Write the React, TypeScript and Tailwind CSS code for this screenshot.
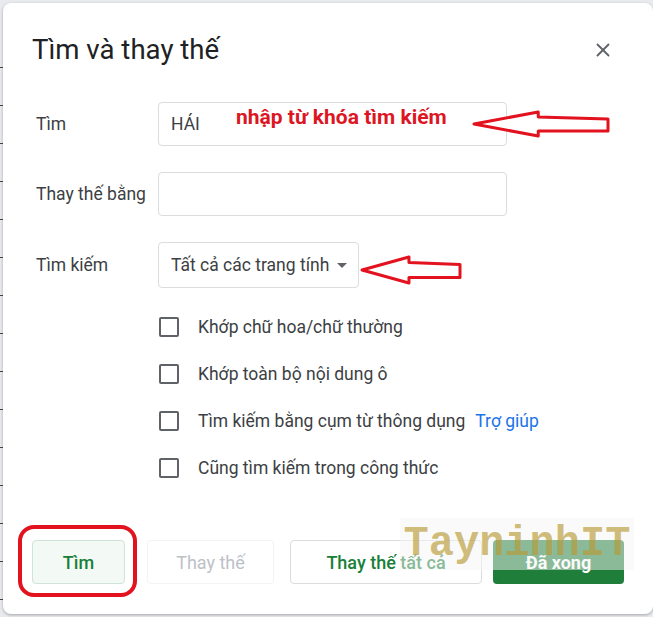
import { X } from "lucide-react";

const options = [
  { label: "Khớp chữ hoa/chữ thường" },
  { label: "Khớp toàn bộ nội dung ô" },
  { label: "Tìm kiếm bằng cụm từ thông dụng", help: "Trợ giúp" },
  { label: "Cũng tìm kiếm trong công thức" },
];

function Checkbox() {
  return <span className="h-[20px] w-[20px] shrink-0 rounded-[2px] border-2 border-[#5f6368]" />;
}

function LeftArrow({ w, h }: { w: number; h: number }) {
  // hand-drawn red outline arrow pointing left
  const head = w * 0.48;
  const sy = h * 0.25;
  return (
    <svg width={w} height={h} viewBox={`0 0 ${w} ${h}`}>
      <polygon
        points={`2,${h / 2} ${head},2 ${head},${sy} ${w - 2},${sy + 2} ${w - 2},${h - sy} ${head},${h - sy} ${head},${h - 2}`}
        fill="white"
        stroke="#e3121f"
        strokeWidth="3"
        strokeLinejoin="round"
      />
    </svg>
  );
}

export default function App() {
  return (
    <div className="relative h-[617px] w-[653px] overflow-hidden bg-[#e8eaed] font-['Roboto',sans-serif]">
      {/* spreadsheet grid peeking out on the left */}
      <div className="absolute left-0 top-[30px] h-[587px] w-[3px] bg-[repeating-linear-gradient(to_bottom,transparent_0px,transparent_37px,#444_37px,#444_38px)]" />

      <div className="relative ml-[3px] mt-[3px] flex h-[611px] w-[650px] flex-col rounded-lg bg-white pl-[29px] pr-[28px] pt-[31px] shadow-[0_1px_3px_rgba(0,0,0,0.3)]">
        {/* header */}
        <div className="flex h-8 items-center justify-between">
          <h1 className="text-[27.6px] leading-8 text-[#202124]">Tìm và thay thế</h1>
          <X className="mr-[11px] h-[22px] w-[22px] text-[#5f6368]" strokeWidth={2} />
        </div>

        {/* fields */}
        <div className="mt-9 grid grid-cols-[122px_auto] items-center gap-y-[26px] pl-[4px] text-[17.5px] text-[#3c4043]">
          <span>Tìm</span>
          <div className="flex h-11 w-[349px] items-center rounded border border-[#dadce0] px-3 text-[#3c4043]">HÁI</div>

          <span>Thay thế bằng</span>
          <div className="h-11 w-[349px] rounded border border-[#dadce0]" />

          <span>Tìm kiếm</span>
          <div className="flex h-[46px] w-fit items-center gap-[8px] rounded border border-[#dadce0] pl-3 pr-[11px]">
            <span className="text-[#3c4043]">Tất cả các trang tính</span>
            <span className="h-0 w-0 border-x-[5px] border-t-[5px] border-x-transparent border-t-[#5f6368]" />
          </div>
        </div>

        {/* options */}
        <div className="ml-[127px] mt-[27px] flex flex-col gap-[23px] text-[17.5px] text-[#3c4043]">
          {options.map((o) => (
            <div key={o.label} className="flex h-6 items-center gap-[19px]">
              <Checkbox />
              <span>
                {o.label}
                {o.help && <span className="ml-[10px] text-[#1a73e8]">{o.help}</span>}
              </span>
            </div>
          ))}
        </div>

        {/* footer buttons */}
        <div className="mt-[60px] flex items-center text-[18px] font-medium">
          <button className="h-11 w-[93px] rounded border border-[#cfe3d6] bg-[#f3f9f5] text-[#188038]">Tìm</button>
          <button className="ml-[22px] h-11 w-[127px] rounded border border-[#f1f3f4] font-normal text-[#bdc1c6]">Thay thế</button>
          <button className="ml-[16px] h-11 w-[192px] rounded border border-[#dadce0] text-[#188038]">Thay thế tất cả</button>
          <button className="ml-[11px] h-11 w-[131px] rounded bg-[#1e7e3a] font-bold text-white">Đã xong</button>
        </div>

        {/* annotations */}
        <span className="absolute left-[233px] top-[99px] text-[21px] font-bold text-[#dc1623]">nhập từ khóa tìm kiếm</span>
        <div className="absolute left-[469px] top-[107px]">
          <LeftArrow w={138} h={28} />
        </div>
        <div className="absolute left-[357px] top-[252px]">
          <LeftArrow w={102} h={30} />
        </div>
        <div className="absolute left-[15px] top-[522px] h-[72px] w-[119px] rounded-[16px] border-[4px] border-[#e3121f]" />

        {/* watermark */}
        <div className="absolute left-[397px] top-[515px] flex h-[52px] w-[234px] items-center justify-center bg-[rgba(245,245,245,0.5)]">
          <span className="font-['Liberation_Mono',monospace] text-[42px] font-bold leading-none text-[rgba(185,155,55,0.66)]">TayninhIT</span>
        </div>
      </div>
    </div>
  );
}
